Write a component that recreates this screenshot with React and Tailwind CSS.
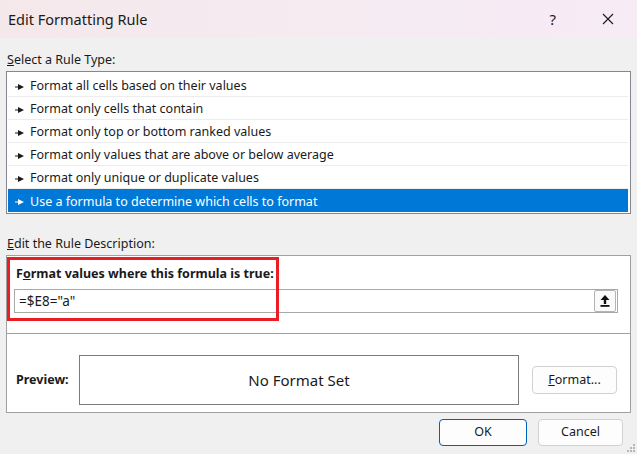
import React from "react";

const rules = [
  "Format all cells based on their values",
  "Format only cells that contain",
  "Format only top or bottom ranked values",
  "Format only values that are above or below average",
  "Format only unique or duplicate values",
  "Use a formula to determine which cells to format",
];

const Pointer = ({ color }) => (
  <svg width="9" height="6" viewBox="0 0 9 6" className="shrink-0">
    <polygon points="0,2.4 3,2.4 3,0 9,3 3,6 3,3.6 0,3.6" fill={color} />
  </svg>
);

const App = () => {
  return (
    <div className="relative w-[637px] h-[454px] overflow-hidden bg-[#1c1c1c] font-['Noto_Sans',sans-serif] text-[#1a1a1a]">
      <div className="flex flex-col h-full bg-[#f0f0f0] rounded-tl-[4px] rounded-tr-[8px]">
        {/* Title bar */}
        <div className="flex items-center h-[38px] pl-2 bg-gradient-to-r from-[#f4e8eb] via-[#f5ebf1] to-[#f7ebf6]">
          <span className="text-[14.5px] leading-none">Edit Formatting Rule</span>
          <span className="ml-auto mr-[46px] text-[15px] leading-none">?</span>
          <svg width="12" height="12" viewBox="0 0 12 12" className="mr-[23px]">
            <path d="M1 1 L11 11 M11 1 L1 11" stroke="#1a1a1a" strokeWidth="1.1" />
          </svg>
        </div>

        <div className="flex flex-col px-[6px]">
          <div className="mt-[14px] mb-[3px] pl-px h-[16px] leading-[16px] text-[12.5px]">
            <span className="underline">S</span>elect a Rule Type:
          </div>

          {/* Rule type list */}
          <div className="h-[143px] border border-[#828790] bg-white pt-[2px] pl-px pr-[2px] flex flex-col">
            {rules.map((rule, i) => {
              const selected = i === rules.length - 1;
              return (
                <div
                  key={rule}
                  className={`flex items-center gap-[6px] h-[23px] pt-[3px] pl-[7px] text-[12.5px] ${
                    selected ? "bg-[#0078d7] text-white" : "border-b border-[#ececec]"
                  }`}
                >
                  <Pointer color={selected ? "#ffffff" : "#1a1a1a"} />
                  <span>{rule}</span>
                </div>
              );
            })}
          </div>

          <div className="mt-[22px] mb-[3px] pl-px h-[16px] leading-[16px] text-[12.5px]">
            <span className="underline">E</span>dit the Rule Description:
          </div>

          {/* Rule description */}
          <div className="h-[158px] border border-[#a0a0a0] bg-white flex flex-col">
            <div className="h-[78px] border-b border-[#a0a0a0] pt-[10px]">
              <div className="pl-[9px] h-[16px] leading-[16px] text-[12.5px] font-bold">
                F<span className="underline">o</span>rmat values where this formula is true:
              </div>
              <div className="flex items-center mt-[7px] ml-[7px] w-[604px] h-[24px] border border-[#a8a8a8]">
                <span className="pl-[4px] text-[13.5px]">=$E8="a"</span>
                <div className="ml-auto mr-px flex items-center justify-center w-[22px] h-[22px] border border-[#b4b4b4] rounded-[2px] bg-[#fafafa]">
                  <svg width="10" height="12" viewBox="0 0 10 12">
                    <path d="M5 0 L9.5 5 H6.2 V9 H3.8 V5 H0.5 Z" fill="#111" />
                    <rect x="0.5" y="10" width="9" height="1.8" fill="#111" />
                  </svg>
                </div>
              </div>
            </div>

            <div className="flex items-center pl-[9px] mt-[21px]">
              <div className="w-[63px] shrink-0 pt-px text-[12.5px] font-bold">Preview:</div>
              <div className="flex items-center justify-center w-[440px] h-[50px] border border-[#7a7a7a] text-[15px]">
                No Format Set
              </div>
              <button className="ml-[13px] w-[85px] h-[28px] rounded-[4px] border border-[#d1d1d1] bg-[#fdfdfd] text-[12.5px]">
                <span className="underline">F</span>ormat...
              </button>
            </div>
          </div>

          {/* Dialog buttons */}
          <div className="flex justify-end gap-[11px] mt-[6px] pr-[8px]">
            <button className="w-[88px] h-[27px] rounded-[4px] border border-[#005fb8] bg-[#fdfdfd] text-[12.5px]">
              OK
            </button>
            <button className="w-[85px] h-[27px] rounded-[4px] border border-[#d1d1d1] bg-[#fdfdfd] text-[12.5px]">
              Cancel
            </button>
          </div>
        </div>
      </div>

      {/* Red highlight annotation */}
      <div className="absolute left-[7px] top-[257px] w-[272px] h-[64px] border-[3px] border-[#ec1c24]" />

      {/* Resize grip */}
      <svg width="10" height="10" viewBox="0 0 10 10" className="absolute right-[1px] bottom-[1px]">
        <rect x="7" y="1" width="2" height="2" fill="#b8b8b8" />
        <rect x="4" y="4" width="2" height="2" fill="#b8b8b8" />
        <rect x="7" y="4" width="2" height="2" fill="#b8b8b8" />
        <rect x="1" y="7" width="2" height="2" fill="#b8b8b8" />
        <rect x="4" y="7" width="2" height="2" fill="#b8b8b8" />
        <rect x="7" y="7" width="2" height="2" fill="#b8b8b8" />
      </svg>
    </div>
  );
};

export default App;
